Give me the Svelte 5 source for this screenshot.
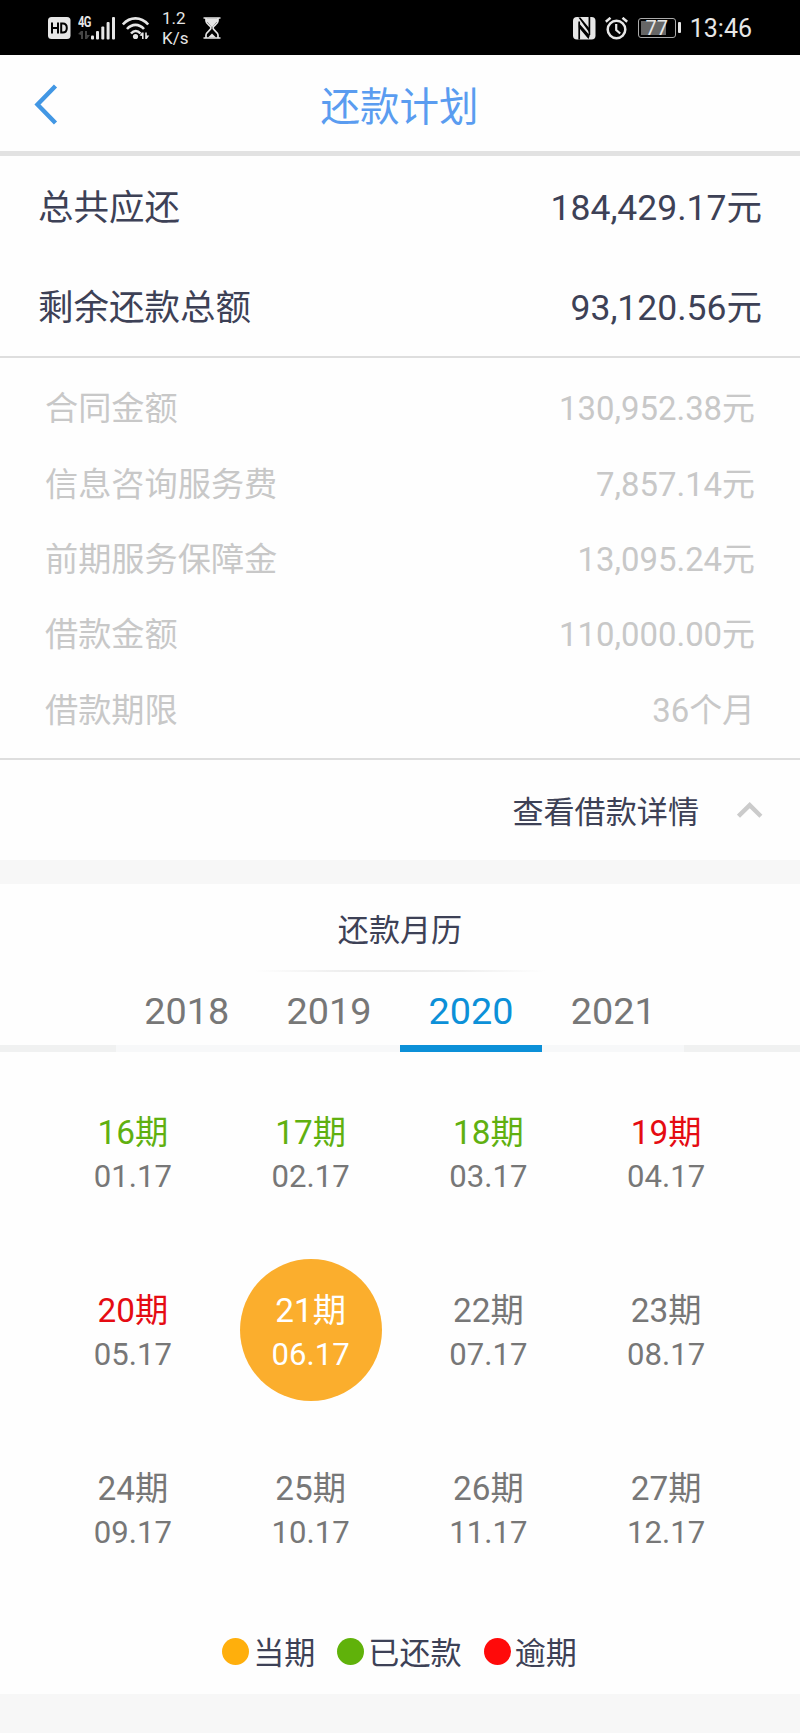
<script lang="ts">
	type Status = 'paid' | 'overdue' | 'current' | 'pending';

	interface Period {
		no: number;
		date: string;
		status: Status;
	}

	const totals = [
		{ label: '总共应还', value: '184,429.17元' },
		{ label: '剩余还款总额', value: '93,120.56元' },
	];

	const details = [
		{ label: '合同金额', value: '130,952.38元' },
		{ label: '信息咨询服务费', value: '7,857.14元' },
		{ label: '前期服务保障金', value: '13,095.24元' },
		{ label: '借款金额', value: '110,000.00元' },
		{ label: '借款期限', value: '36个月' },
	];

	const years = [2018, 2019, 2020, 2021];

	const periods: Period[] = Array.from({ length: 12 }, (_, i) => ({
		no: 16 + i,
		date: `${String(i + 1).padStart(2, '0')}.17`,
		status: i < 3 ? 'paid' : i < 5 ? 'overdue' : i === 5 ? 'current' : 'pending',
	}));

	const legend = [
		{ label: '当期', kind: 'current' },
		{ label: '已还款', kind: 'paid' },
		{ label: '逾期', kind: 'overdue' },
	];

	let year = $state(2020);
	let expanded = $state(true);
</script>

<div class="screen">
	<div class="status">
		<div class="status__group">
			<svg class="hd" width="23" height="22" viewBox="0 0 23 22">
				<rect width="22.5" height="22" rx="3.5" fill="#e6e6e6" />
				<path
					d="M4 5.5v11M10 5.5v11M4 11h6M13.2 6.5v9h1.6c2.8 0 4-1.6 4-4.5s-1.2-4.5-4-4.5z"
					fill="none"
					stroke="#000"
					stroke-width="2"
				/>
			</svg>
			<div class="signal">
				<div class="signal__left">
					<span class="signal__type">4G</span>
					<svg width="12" height="9" viewBox="0 0 12 9" fill="#444">
						<path d="M3 0h2v8H3zM0 3l3-3v4zM7 0h2v8H7zM9 8l3-4H9z" />
					</svg>
				</div>
				<svg width="25" height="23" viewBox="0 0 25 23" fill="#e6e6e6">
					<rect x="0" y="18.5" width="3" height="4" rx="1" />
					<rect x="5" y="14" width="3" height="8.5" rx="1" />
					<rect x="10.3" y="9.5" width="3" height="13" rx="1" />
					<rect x="15.6" y="5" width="3" height="17.5" rx="1" />
					<rect x="21" y="0" width="3" height="22.5" rx="1" />
				</svg>
			</div>
			<svg class="wifi" width="28" height="23" viewBox="0 0 28 23" fill="none">
				<g stroke="#e6e6e6" stroke-width="2.6">
					<path d="M.8 7.5C8-.7 19-.7 26.2 7.5" />
					<path d="M5 12c5-5.5 12-5.5 17 0" />
					<path d="M9 16.5c3-3.3 6.5-3.3 9.5 0" />
				</g>
				<circle cx="13.5" cy="19.5" r="2.6" fill="#e6e6e6" />
				<path
					d="M20 15.5h1.6V22H20zM17.5 18.5l2.500-3V19zM23.200 15.500h1.600V22h-1.600zM24.800 22l2.500-3.500h-2.500z"
					fill="#e6e6e6"
				/>
			</svg>
			<div class="speed"><span>1.2</span><span>K/s</span></div>
			<svg class="hourglass" width="18" height="22" viewBox="0 0 18 22">
				<path
					d="M.5 1h17M.5 21h17M3 1v3c0 3 5 5 5 7s-5 4-5 7v3M15 1v3c0 3-5 5-5 7s5 4 5 7v3"
					fill="none"
					stroke="#e6e6e6"
					stroke-width="1.7"
				/>
				<path d="M4 4.500h10L9 10.500zM5 20.500l4-4 4 4z" fill="#e6e6e6" />
				<path d="M3 1.500h12V5H3z" fill="#e6e6e6" />
			</svg>
		</div>
		<div class="status__group">
			<svg width="23" height="23" viewBox="0 0 23 23">
				<rect width="22.5" height="22.5" rx="4" fill="#e6e6e6" />
				<path d="M6.2 22.5V4.5M16.4 0v18" stroke="#000" stroke-width="1.7" />
				<path d="M5.400.5h2L17 12v4.500zM5.800 6l11 12.500-1.300 3.500L5.800 10.500z" fill="#000" />
			</svg>
			<svg class="alarm" width="23" height="23" viewBox="0 0 23 23" fill="none" stroke="#e6e6e6">
				<circle cx="11.5" cy="12.5" r="8.8" stroke-width="2.5" />
				<path d="M11.2 7v6l4 3.5" stroke-width="2.2" />
				<path d="M.8 4.800L5.500.8M22.200 4.800L17.500.8" stroke-width="2.5" />
			</svg>
			<div class="battery"><span>77</span></div>
			<span class="clock">13:46</span>
		</div>
	</div>

	<header class="header">
		<button class="header__back" aria-label="返回">
			<svg width="26" height="42" viewBox="0 0 26 42" fill="none">
				<path d="M21.5 2L3.5 20.5l18 18.5" stroke="#4297e4" stroke-width="4.4" />
			</svg>
		</button>
		<h1>还款计划</h1>
	</header>

	<section class="totals">
		{#each totals as row}
			<div class="totals__row"><span>{row.label}</span><span>{row.value}</span></div>
		{/each}
	</section>

	{#if expanded}
		<section class="details">
			{#each details as row}
				<div class="details__row">
					<span class="details__label">{row.label}</span>
					<span>{row.value}</span>
				</div>
			{/each}
		</section>
	{/if}

	<button class="toggle" onclick={() => (expanded = !expanded)}>
		<span>查看借款详情</span>
		<svg class:flipped={!expanded} width="26" height="19" viewBox="0 0 26 19" fill="none">
			<path d="M1.5 16.2L12.7 5.2l11.2 11" stroke="#cbcbcb" stroke-width="4.4" />
		</svg>
	</button>

	<section class="calendar">
		<h2>还款月历</h2>
		<div class="calendar__rule"></div>
		<div class="tabs">
			{#each years as y}
				<button class="tab" class:tab--active={y === year} onclick={() => (year = y)}>{y}</button>
			{/each}
		</div>

		<div class="grid">
			{#each periods as p (p.no)}
				<div class="period period--{p.status}">
					<span class="period__no">{p.no}期</span>
					<span class="period__date">{p.date}</span>
				</div>
			{/each}
		</div>

		<div class="legend">
			{#each legend as item}
				<div class="legend__item">
					<i class="dot dot--{item.kind}"></i>
					<span>{item.label}</span>
				</div>
			{/each}
		</div>
	</section>
</div>

<style>
	:global(body) {
		margin: 0;
		background: #f7f7f7;
	}

	.screen {
		width: 800px;
		height: 1733px;
		overflow: hidden;
		background: #f7f7f7;
		color: #3d4156;
		font-family: Roboto, 'Noto Sans CJK SC', sans-serif;
	}

	svg {
		display: block;
		flex-shrink: 0;
	}

	button {
		padding: 0;
		border: 0;
		background: none;
		color: inherit;
		font-family: inherit;
		cursor: pointer;
	}

	.status {
		display: flex;
		justify-content: space-between;
		height: 55px;
		box-sizing: border-box;
		padding: 1px 48px 0;
		background: #000;
		color: #e6e6e6;
	}

	.status__group {
		display: flex;
		align-items: center;
	}

	.signal {
		display: flex;
		margin-left: 7px;
	}

	.signal__left {
		display: flex;
		flex-direction: column;
		justify-content: space-between;
		width: 13px;
	}

	.signal__type {
		font: 700 14px/11px Roboto, sans-serif;
		letter-spacing: -1px;
		transform: scaleX(0.8);
		transform-origin: left;
	}

	.wifi {
		margin-left: 6px;
	}

	.speed {
		display: flex;
		flex-direction: column;
		width: 27px;
		margin: 0 0 0 12px;
		font-size: 17px;
		line-height: 20px;
	}

	.hourglass {
		margin-left: 14px;
	}

	.alarm {
		margin-left: 9px;
	}

	.battery {
		position: relative;
		width: 38px;
		height: 20px;
		box-sizing: border-box;
		margin: 0 14px 0 10px;
		border: 1.5px solid #aaa;
		border-radius: 3px;
		background: linear-gradient(90deg, #666 25px, #000 25px) content-box;
		padding: 2px;
		font-size: 20px;
		line-height: 15px;
		text-align: center;
	}

	.battery::after {
		content: '';
		position: absolute;
		top: 3px;
		right: -6px;
		width: 3px;
		height: 11px;
		border-radius: 1px;
		background: #e6e6e6;
	}

	.clock {
		font-size: 25px;
	}

	.header {
		display: grid;
		grid-template-columns: 100px 1fr 100px;
		align-items: center;
		height: 101px;
		box-sizing: border-box;
		border-bottom: 5px solid #e2e2e2;
		background: #fefefe;
	}

	.header__back {
		justify-self: start;
		margin: 3px 0 0 34px;
	}

	h1 {
		margin: 9px 1px 0 0;
		color: #5a9cf0;
		font-size: 39.5px;
		font-weight: 400;
		line-height: 50px;
		text-align: center;
	}

	.totals {
		padding-bottom: 1px;
		background: #fefefe;
		border-bottom: 2px solid #dedede;
		font-size: 35.5px;
	}

	.totals__row {
		display: flex;
		align-items: center;
		justify-content: space-between;
		height: 102px;
		padding: 0 38px;
	}

	.totals__row:first-child {
		height: 97px;
	}

	.details {
		padding: 10px 45px 13px;
		border-bottom: 2px solid #dedede;
		background: #fefefe;
		color: #c8c8c8;
		font-size: 32.9px;
	}

	.details__row {
		display: flex;
		align-items: center;
		justify-content: space-between;
		height: 75.4px;
	}

	.details__label {
		font-size: 33.2px;
	}

	.toggle {
		display: flex;
		align-items: center;
		justify-content: flex-end;
		gap: 38px;
		width: 100%;
		height: 100px;
		padding: 0 37px 0 0;
		background: #fefefe;
		font-size: 31.1px;
	}

	.flipped {
		transform: rotate(180deg);
	}

	.calendar {
		height: 810px;
		margin-top: 24px;
		background: #fefefe;
	}

	h2 {
		height: 86px;
		margin: 0;
		font-size: 31.1px;
		font-weight: 400;
		line-height: 93px;
		text-align: center;
	}

	.calendar__rule {
		width: 290px;
		height: 2px;
		margin: 0 auto;
		background: linear-gradient(90deg, #fefefe, #eee 30%, #ebebeb 50%, #eee 70%, #fefefe);
	}

	.tabs {
		display: flex;
		justify-content: center;
		height: 80px;
		background: linear-gradient(#f0f1f1, #f0f1f1) bottom / 100% 7px no-repeat;
	}

	.tab {
		width: 142.2px;
		box-sizing: border-box;
		padding-top: 6px;
		border-bottom: 7px solid #f7f8f9;
		color: #777;
		font-size: 37.8px;
	}

	.tab--active {
		border-bottom-color: #0c90d8;
		color: #0c90d8;
	}

	.grid {
		display: grid;
		grid-template-columns: repeat(4, 142.2px);
		gap: 35.6px;
		justify-content: center;
		margin-top: 29px;
	}

	.period {
		display: flex;
		flex-direction: column;
		align-items: center;
		justify-content: center;
		height: 142.2px;
		box-sizing: border-box;
		padding: 6px 1px 0 0;
		border-radius: 50%;
		color: #777;
	}

	.period__no {
		font-size: 33.3px;
		line-height: 44px;
	}

	.period__date {
		font-size: 31.1px;
		line-height: 44px;
	}

	.period--paid .period__no {
		color: #60b010;
	}

	.period--overdue .period__no {
		color: #e50b12;
	}

	.period--current {
		background: #fbae2d;
		color: #fff;
	}

	.legend {
		display: flex;
		justify-content: center;
		gap: 22px;
		margin: 52px 1px 0 0;
		font-size: 31.1px;
		line-height: 46px;
	}

	.legend__item {
		display: flex;
		align-items: center;
		gap: 4px;
	}

	.dot {
		width: 27px;
		height: 27px;
		margin-bottom: 4px;
		border-radius: 50%;
	}

	.dot--current {
		background: #ffaf0c;
	}

	.dot--paid {
		background: #60b20a;
	}

	.dot--overdue {
		background: #ff0a0a;
	}
</style>
